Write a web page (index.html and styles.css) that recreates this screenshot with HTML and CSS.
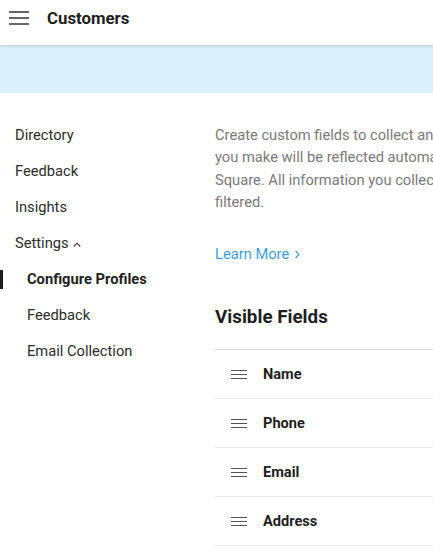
FILE: index.html
```html
<!DOCTYPE html>
<html>
<head>
<meta charset="utf-8">
<link rel="stylesheet" href="styles.css">
</head>
<body>
<header class="topbar">
  <svg class="menu-icon" width="20" height="14" viewBox="0 0 20 14"><rect x="0" y="0" width="20" height="2" fill="#666"/><rect x="0" y="6" width="20" height="2" fill="#666"/><rect x="0" y="12" width="20" height="2" fill="#666"/></svg>
  <span class="title">Customers</span>
</header>
<div class="banner"></div>
<div class="main">
  <nav class="sidebar">
    <div class="nav-item">Directory</div>
    <div class="nav-item">Feedback</div>
    <div class="nav-item">Insights</div>
    <div class="nav-item">Settings <svg class="caret" width="8" height="5" viewBox="0 0 8 5"><path d="M0.7 4.5 L4 1.2 L7.3 4.5" fill="none" stroke="#333" stroke-width="1.1"/></svg></div>
    <div class="nav-item sub active">Configure Profiles</div>
    <div class="nav-item sub">Feedback</div>
    <div class="nav-item sub">Email Collection</div>
  </nav>
  <section class="content">
    <p class="intro">Create custom fields to collect and organize customer information. Any changes<br>you make will be reflected automatically on your customer profiles across<br>Square. All information you collect can be searched and<br>filtered.</p>
    <a class="learn">Learn More <svg class="chev" width="5" height="9" viewBox="0 0 5 9"><path d="M0.6 0.8 L4 4.5 L0.6 8.2" fill="none" stroke="#3d9fd8" stroke-width="1.2"/></svg></a>
    <h2 class="heading">Visible Fields</h2>
    <div class="fields">
      <div class="field"><span class="drag"></span><span class="fname">Name</span></div>
      <div class="field"><span class="drag"></span><span class="fname">Phone</span></div>
      <div class="field"><span class="drag"></span><span class="fname">Email</span></div>
      <div class="field"><span class="drag"></span><span class="fname">Address</span></div>
    </div>
  </section>
</div>
</body>
</html>
```
FILE: styles.css
```css
html, body {
  margin: 0;
  padding: 0;
  background: #fff;
  overflow: hidden;
  font-family: Roboto, "Liberation Sans", Arial, sans-serif;
  color: #333;
}
.topbar {
  height: 45px;
  display: flex;
  align-items: center;
  border-bottom: 1px solid #c9d3d8;
  box-shadow: 0 1px 2px rgba(0,0,0,0.08);
  position: relative;
  z-index: 1;
}
.menu-icon {
  margin-left: 9px;
  margin-top: -10px;
  display: block;
}
.title {
  margin-left: 18px;
  font-size: 16.8px;
  font-weight: 700;
  color: #1f1f1f;
  margin-top: -9px;
}
.banner {
  height: 47px;
  background: #d8f0fc;
}
.main {
  display: flex;
  padding-top: 24px;
}
.sidebar {
  width: 215px;
  flex: none;
}
.nav-item {
  height: 36px;
  line-height: 36px;
  font-size: 14.7px;
  padding-left: 15px;
  color: #2d2d2d;
  position: relative;
}
.nav-item.sub {
  padding-left: 27px;
}
.nav-item.active {
  font-weight: 700;
  color: #1f1f1f;
}
.nav-item.active::before {
  content: "";
  position: absolute;
  left: 0;
  top: 9px;
  width: 3px;
  height: 19px;
  background: #1f1f1f;
}
.caret {
  margin-left: 1px;
  vertical-align: 1px;
}
.content {
  flex: none;
  width: 600px;
  padding-top: 7px;
}
.intro {
  margin: 0;
  font-size: 14.7px;
  line-height: 22.3px;
  color: #7a7a7a;
  white-space: nowrap;
}
.learn {
  display: block;
  margin-top: 30px;
  font-size: 14.7px;
  line-height: 22px;
  color: #3d9fd8;
}
.chev {
  margin-left: 2px;
  vertical-align: 0px;
}
.heading {
  margin: 40px 0 0 0;
  font-size: 18.8px;
  line-height: 24px;
  font-weight: 700;
  color: #1f1f1f;
}
.fields {
  margin-top: 20px;
  border-top: 1px solid #d6d6d6;
}
.field {
  height: 48px;
  display: flex;
  align-items: center;
  border-bottom: 1px solid #ececec;
}
.drag {
  margin-left: 16px;
  width: 16px;
  height: 9px;
  border-top: 1px solid #555;
  border-bottom: 1px solid #555;
  position: relative;
  box-sizing: border-box;
}
.drag::after {
  content: "";
  position: absolute;
  left: 0;
  right: 0;
  top: 3px;
  height: 1px;
  background: #555;
}
.fname {
  margin-left: 16px;
  font-size: 14.6px;
  font-weight: 700;
  color: #1f1f1f;
}
```
